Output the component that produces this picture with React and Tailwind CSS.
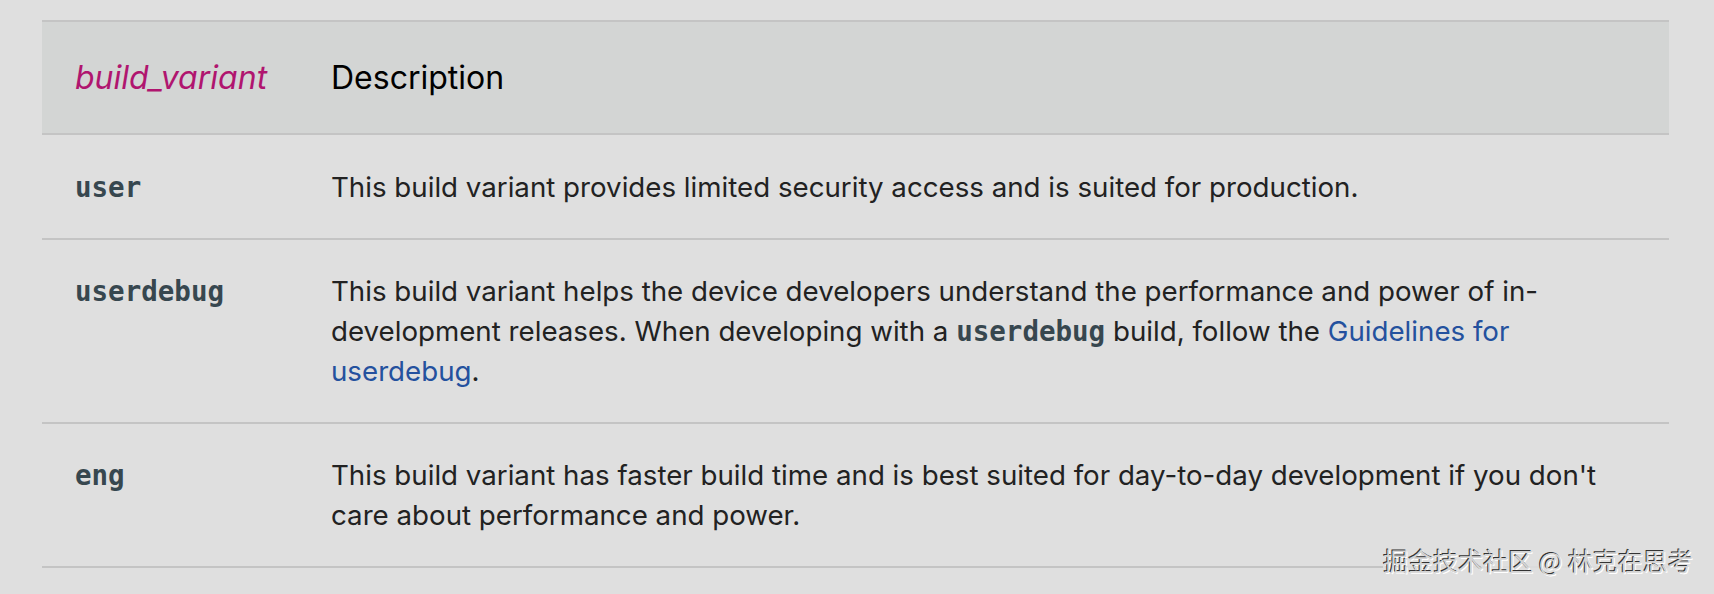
import React from 'react';

const MONO = "font-['DejaVu_Sans_Mono',monospace] font-bold text-[#37474f] text-[27.5px]";

const ROWS = [
  {
    name: 'user',
    desc: (
      <>This build variant provides limited security access and is suited for production.</>
    ),
    pad: 'pt-[32px] pb-[31px]',
  },
  {
    name: 'userdebug',
    desc: (
      <>
        This build variant helps the device developers understand the performance and power of
        in-development releases. When developing with a <span className={MONO}>userdebug</span> build,
        follow the <a className="text-[#24519e]">Guidelines for userdebug</a>.
      </>
    ),
    pad: 'py-[31px]',
  },
  {
    name: 'eng',
    desc: (
      <>
        This build variant has faster build time and is best suited for day-to-day development if
        you don't care about performance and power.
      </>
    ),
    pad: 'py-[31px]',
  },
];

export default function App() {
  return (
    <div className="relative h-[594px] w-full overflow-hidden bg-[#dfdfdf] pt-[20px] pl-[42px] font-['Inter',sans-serif]">
      <div className="w-[1627px] border-t-2 border-[#c4c4c4]">
        <div className="grid grid-cols-[256px_1fr] border-b-2 border-[#c4c4c4] bg-[#d3d5d4] py-[32px] text-[32px] leading-[47px]">
          <div className="pl-[33px] italic text-[#b0156f]">build_variant</div>
          <div className="pl-[33px] pr-[33px] text-black">Description</div>
        </div>
        {ROWS.map((r) => (
          <div
            key={r.name}
            className={`grid grid-cols-[256px_1fr] border-b-2 border-[#c4c4c4] ${r.pad} text-[27.7px] leading-[40px] text-[#222]`}
          >
            <div className={`pl-[33px] ${MONO}`}>{r.name}</div>
            <div className="pl-[33px] pr-[33px]">{r.desc}</div>
          </div>
        ))}
      </div>
      <div className="absolute right-[21px] top-[548px] bg-[#dfdfdf]/85 font-['Noto_Sans_CJK_SC',sans-serif] text-[25px] leading-[25px] text-[#d4d4d4] [text-shadow:-1px_-1px_0_#333333,1px_1px_0_#ffffff]">
        掘金技术社区 @ 林克在思考
      </div>
    </div>
  );
}
